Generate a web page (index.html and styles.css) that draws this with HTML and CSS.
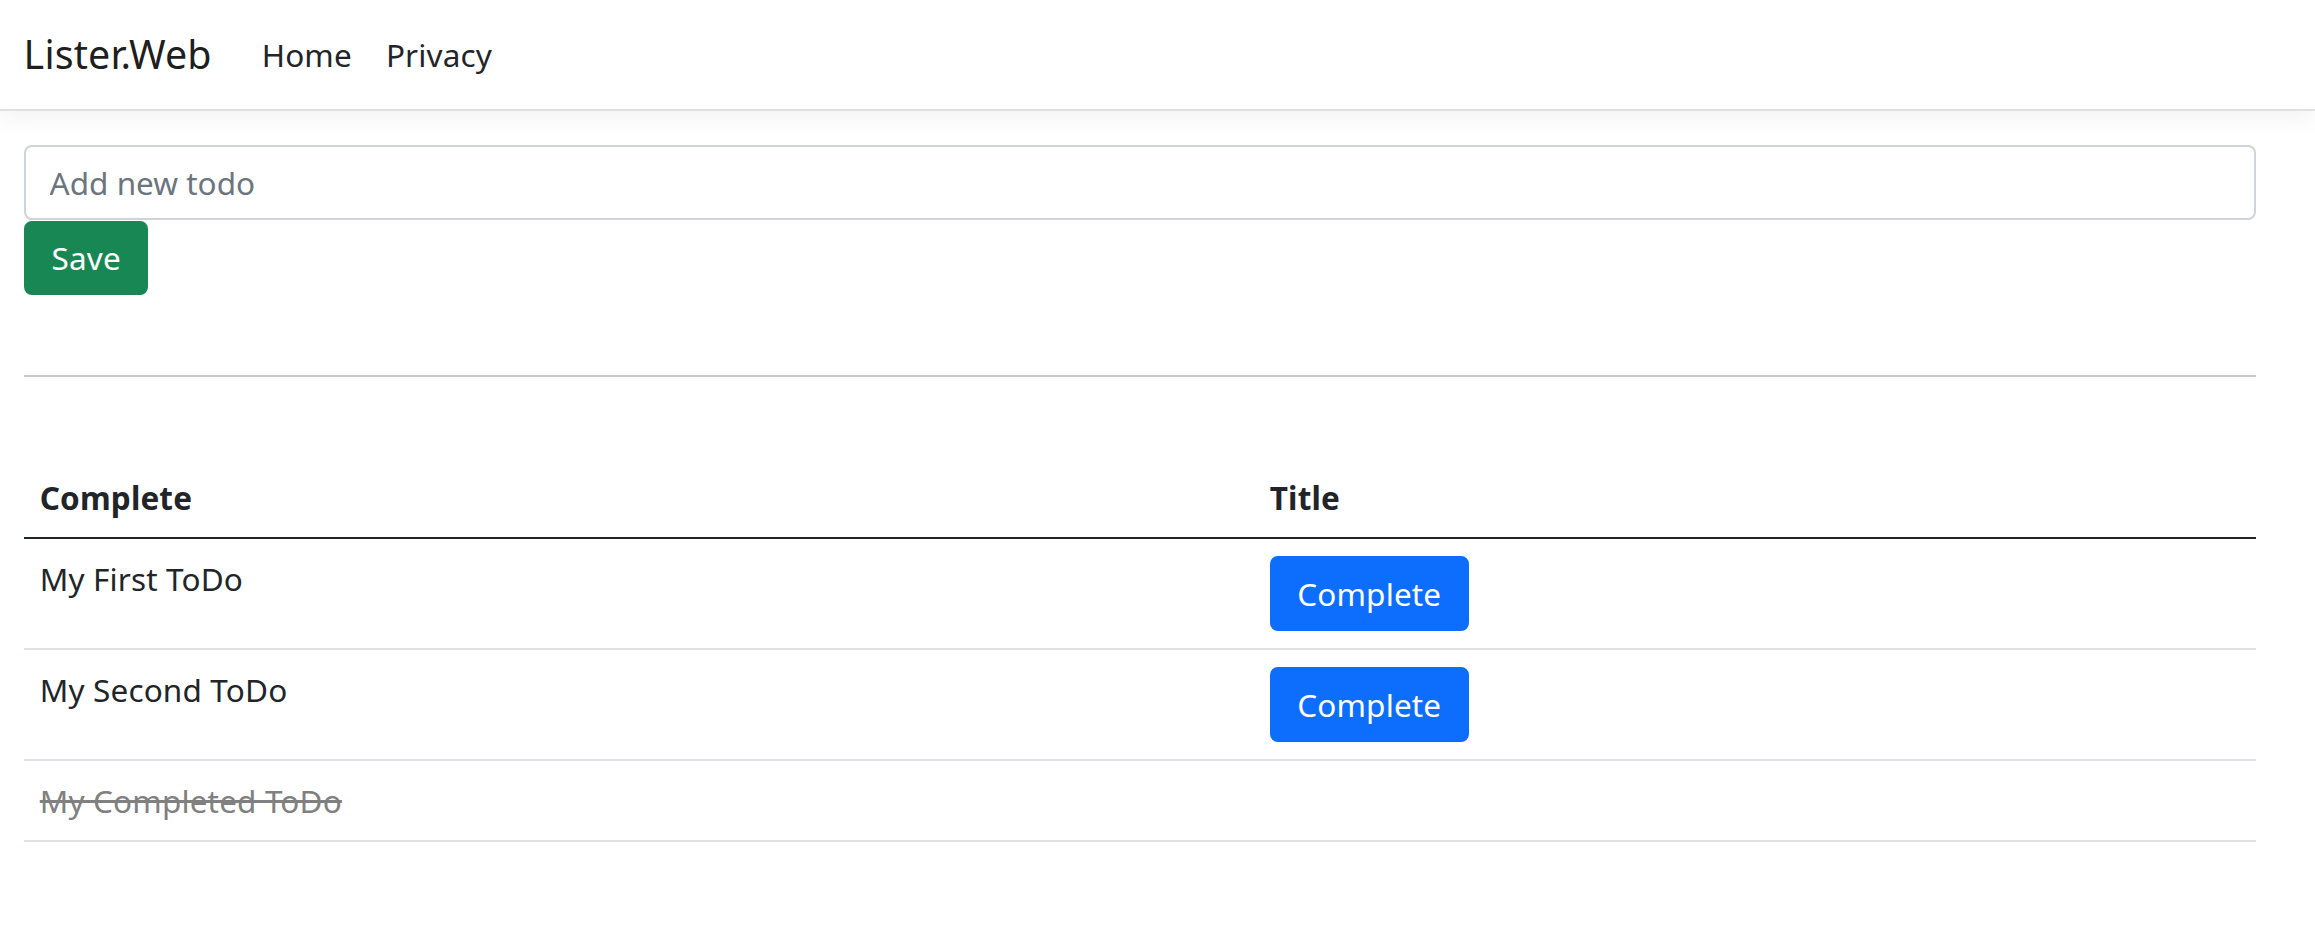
FILE: index.html
```html
<!DOCTYPE html>
<html lang="en">
<head>
<meta charset="utf-8">
<title>Lister.Web</title>
<link rel="stylesheet" href="styles.css">
</head>
<body>
<header class="topbar">
  <nav class="navbar">
    <a class="brand" href="#">Lister.Web</a>
    <ul class="nav-links">
      <li><a class="nav-link" href="#">Home</a></li>
      <li><a class="nav-link" href="#">Privacy</a></li>
    </ul>
  </nav>
</header>
<main class="page">
  <form class="todo-form">
    <input class="todo-input" type="text" placeholder="Add new todo">
    <button class="btn btn-save" type="button">Save</button>
  </form>
  <hr class="divider">
  <table class="todo-table">
    <thead>
      <tr>
        <th class="col-main">Complete</th>
        <th>Title</th>
      </tr>
    </thead>
    <tbody>
      <tr>
        <td>My First ToDo</td>
        <td class="action"><button class="btn btn-complete" type="button">Complete</button></td>
      </tr>
      <tr>
        <td>My Second ToDo</td>
        <td class="action"><button class="btn btn-complete" type="button">Complete</button></td>
      </tr>
      <tr>
        <td class="done">My Completed ToDo</td>
        <td></td>
      </tr>
    </tbody>
  </table>
</main>
</body>
</html>
```
FILE: styles.css
```css
* { box-sizing: border-box; }

html, body {
  margin: 0;
  padding: 0;
  background: #ffffff;
}

body {
  font-family: "Noto Sans", "Open Sans", sans-serif;
  font-size: 31.5px;
  line-height: 1.5;
  color: #212529;
  letter-spacing: 0.15px;
}

.topbar {
  background: #ffffff;
  border-bottom: 2px solid #dee2e6;
  box-shadow: 0 8px 24px rgba(0, 0, 0, 0.05);
  margin-bottom: 34px;
}

.navbar {
  display: flex;
  align-items: center;
  padding: 15px 23.6px;
}

.brand {
  font-size: 39.4px;
  line-height: 1.5;
  padding: 9.8px 0;
  margin-right: 33px;
  color: rgba(0, 0, 0, 0.9);
  text-decoration: none;
  white-space: nowrap;
}

.nav-links {
  display: flex;
  list-style: none;
  margin: 0;
  padding: 0;
}

.nav-link {
  display: block;
  padding: 15.75px 17px;
  color: #212529;
  text-decoration: none;
}

.page {
  padding: 0 59px 0 24px;
}

.todo-form {
  display: flex;
  flex-direction: column;
  align-items: flex-start;
}

.todo-input {
  display: block;
  width: 100%;
  font: inherit;
  line-height: 1.5;
  color: #212529;
  padding: 11.8px 23.6px;
  border: 2px solid #ced4da;
  border-radius: 7.9px;
  background: #ffffff;
  outline: none;
}

.todo-input::placeholder {
  color: #6c757d;
  opacity: 1;
}

.btn {
  display: inline-block;
  font: inherit;
  letter-spacing: inherit;
  line-height: 1.5;
  padding: 11.8px 25.5px;
  border: 2px solid transparent;
  border-radius: 7.9px;
  color: #ffffff;
  cursor: pointer;
}

.btn-save {
  background: #198754;
  border-color: #198754;
  margin-top: 1px;
}

.btn-complete {
  background: #0d6efd;
  border-color: #0d6efd;
}

.divider {
  border: 0;
  border-top: 2px solid #c8c9ca;
  margin: 80px 0 81px;
  height: 0;
}

.todo-table {
  width: 100%;
  border-collapse: collapse;
  vertical-align: top;
}

.todo-table th,
.todo-table td {
  text-align: left;
  vertical-align: top;
  padding: 15.75px;
  border-bottom: 2px solid #dee2e6;
}

.todo-table td.action {
  padding-top: 17px;
  padding-bottom: 17px;
}

.todo-table th {
  font-weight: 700;
  border-bottom: 2px solid #212529;
}

.col-main {
  width: 1230px;
}

.done {
  color: #808080;
  text-decoration: line-through;
}
```
